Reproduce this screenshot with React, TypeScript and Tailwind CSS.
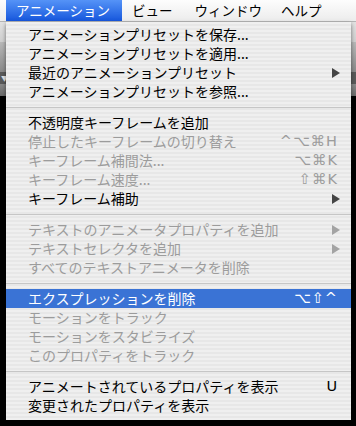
import React from "react";

type Item =
  | { sep: true }
  | { sep?: false; label: string; shortcut?: string; sub?: boolean; off?: boolean; hot?: boolean };

const ITEMS: Item[] = [
  { label: "アニメーションプリセットを保存..." },
  { label: "アニメーションプリセットを適用..." },
  { label: "最近のアニメーションプリセット", sub: true },
  { label: "アニメーションプリセットを参照..." },
  { sep: true },
  { label: "不透明度キーフレームを追加" },
  { label: "停止したキーフレームの切り替え", shortcut: "^⌥⌘H", off: true },
  { label: "キーフレーム補間法...", shortcut: "⌥⌘K", off: true },
  { label: "キーフレーム速度...", shortcut: "⇧⌘K", off: true },
  { label: "キーフレーム補助", sub: true },
  { sep: true },
  { label: "テキストのアニメータプロパティを追加", sub: true, off: true },
  { label: "テキストセレクタを追加", sub: true, off: true },
  { label: "すべてのテキストアニメータを削除", off: true },
  { sep: true },
  { label: "エクスプレッションを削除", shortcut: "⌥⇧^", hot: true },
  { label: "モーションをトラック", off: true },
  { label: "モーションをスタビライズ", off: true },
  { label: "このプロパティをトラック", off: true },
  { sep: true },
  { label: "アニメートされているプロパティを表示", shortcut: "U" },
  { label: "変更されたプロパティを表示" },
];

function Arrow({ off, hot }: { off?: boolean; hot?: boolean }) {
  const fill = hot ? "#ffffff" : off ? "#a3a3a3" : "#444444";
  return (
    <svg width="8" height="10" viewBox="0 0 8 10" className="mr-[-3px]">
      <path d="M0 0 L8 5 L0 10 Z" fill={fill} />
    </svg>
  );
}

function MenuRow({ item }: { item: Item }) {
  if (item.sep) {
    return (
      <div className="h-[12px] flex items-center">
        <div className="h-px w-full bg-[#c6c6c6]" />
      </div>
    );
  }
  const color = item.hot ? "text-white" : item.off ? "text-[#9c9c9c]" : "text-black";
  return (
    <div
      className={`flex h-[19px] items-center pl-[22px] pr-[14px] ${color} ${item.hot ? "bg-[#3a73d5]" : ""}`}
    >
      <span className="flex-1 whitespace-nowrap">{item.label}</span>
      {item.shortcut && (
        <span className="font-['DejaVu_Sans','Noto_Sans_CJK_JP',sans-serif] text-[14.5px] tracking-[1px] mr-[-1px]">
          {item.shortcut}
        </span>
      )}
      {item.sub && <Arrow off={item.off} hot={item.hot} />}
    </div>
  );
}

export default function App() {
  return (
    <div className="relative h-[426px] w-[356px] overflow-hidden bg-black font-['Noto_Sans_CJK_JP','Hiragino_Sans',sans-serif] text-[14px] leading-[19px]">
      {/* menubar */}
      <div className="flex h-[22px] items-center border-b border-[#b5b5b5] bg-gradient-to-b from-[#fdfdfd] to-[#ececec] text-[13.5px] text-black">
        <div className="ml-[6px] flex h-full w-[116px] items-center bg-gradient-to-b from-[#5593f7] to-[#1656dc] pl-[10px] text-white">
          アニメーション
        </div>
        <div className="ml-[10px]">ビュー</div>
        <div className="ml-[22px]">ウィンドウ</div>
        <div className="ml-[19px]">ヘルプ</div>
      </div>

      {/* window content behind the menu */}
      <div className="h-[20px] bg-gradient-to-b from-[#e2e2e2] to-[#cfcfcf]" />
      <div className="h-[30px] bg-gradient-to-b from-[#b9b9b9] to-[#8a8a8a]" />
      <div className="flex h-[12px] items-center bg-[#5a5a5a] pl-[1px] text-[7px] leading-none text-[#e5e5e5]">▼</div>
      <div className="h-[12px] bg-gradient-to-b from-[#8a8a8a] to-[#6a6a6a]" />

      {/* dropdown */}
      <div className="absolute left-[6px] top-[22px] w-[345px] bg-[repeating-linear-gradient(180deg,#efefef_0px,#efefef_2px,#e7e7e7_2px,#e7e7e7_4px)] pb-[5px] pt-[3px] shadow-[0_2px_4px_rgba(0,0,0,0.5)]">
        {ITEMS.map((item, i) => (
          <MenuRow key={i} item={item} />
        ))}
      </div>
    </div>
  );
}
